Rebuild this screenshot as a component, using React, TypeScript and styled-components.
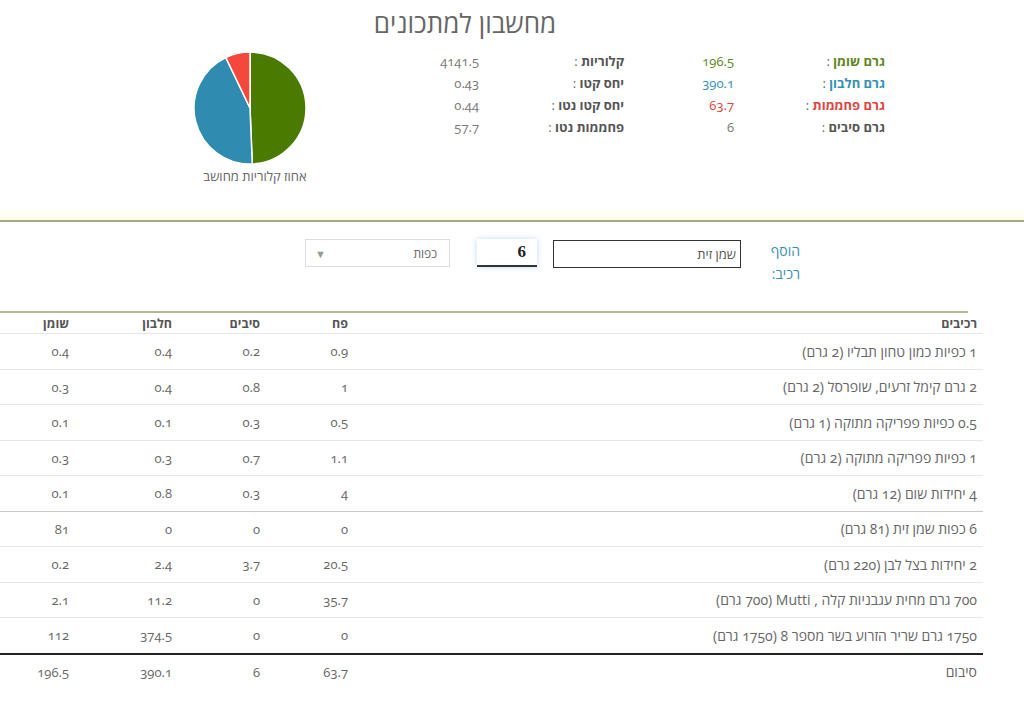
import React from "react";
import styled, { createGlobalStyle } from "styled-components";

const GlobalStyle = createGlobalStyle`
    body {
        margin: 0;
        background: #fff;
        font-family: "Open Sans", "Liberation Sans", "DejaVu Sans", sans-serif;
        font-variant-numeric: oldstyle-nums;
        color: #666;
    }
`;

const COLORS = {
    fat: "#4b7a00",
    protein: "#2f8cb0",
    carbs: "#f4483c",
};

type Stat = { label: string; value: string; color?: string };

const rightStats: Stat[] = [
    { label: "גרם שומן", value: "196.5", color: "#5f8520" },
    { label: "גרם חלבון", value: "390.1", color: "#3590b5" },
    { label: "גרם פחממות", value: "63.7", color: "#e0443f" },
    { label: "גרם סיבים", value: "6" },
];

const leftStats: Stat[] = [
    { label: "קלוריות", value: "4141.5" },
    { label: "יחס קטו", value: "0.43" },
    { label: "יחס קטו נטו", value: "0.44" },
    { label: "פחממות נטו", value: "57.7" },
];

type Ingredient = { name: string; carbs: string; fiber: string; protein: string; fat: string; strong?: boolean };

const ingredients: Ingredient[] = [
    { name: "1 כפיות כמון טחון תבליו (2 גרם)", carbs: "0.9", fiber: "0.2", protein: "0.4", fat: "0.4" },
    { name: "2 גרם קימל זרעים, שופרסל (2 גרם)", carbs: "1", fiber: "0.8", protein: "0.4", fat: "0.3" },
    { name: "0.5 כפיות פפריקה מתוקה (1 גרם)", carbs: "0.5", fiber: "0.3", protein: "0.1", fat: "0.1" },
    { name: "1 כפיות פפריקה מתוקה (2 גרם)", carbs: "1.1", fiber: "0.7", protein: "0.3", fat: "0.3" },
    { name: "4 יחידות שום (12 גרם)", carbs: "4", fiber: "0.3", protein: "0.8", fat: "0.1", strong: true },
    { name: "6 כפות שמן זית (81 גרם)", carbs: "0", fiber: "0", protein: "0", fat: "81" },
    { name: "2 יחידות בצל לבן (220 גרם)", carbs: "20.5", fiber: "3.7", protein: "2.4", fat: "0.2" },
    { name: "700 גרם מחית עגבניות קלה , Mutti (700 גרם)", carbs: "35.7", fiber: "0", protein: "11.2", fat: "2.1" },
    { name: "1750 גרם שריר הזרוע בשר מספר 8 (1750 גרם)", carbs: "0", fiber: "0", protein: "374.5", fat: "112" },
];

// pie slices by calories: fat x9, protein x4, carbs x4
function slicePath(cx: number, cy: number, r: number, from: number, to: number) {
    const a0 = ((from - 90) * Math.PI) / 180;
    const a1 = ((to - 90) * Math.PI) / 180;
    const x0 = cx + r * Math.cos(a0);
    const y0 = cy + r * Math.sin(a0);
    const x1 = cx + r * Math.cos(a1);
    const y1 = cy + r * Math.sin(a1);
    const large = to - from > 180 ? 1 : 0;
    return `M${cx},${cy} L${x0},${y0} A${r},${r} 0 ${large} 1 ${x1},${y1} Z`;
}

function Pie() {
    const parts = [
        { v: 196.5 * 9, c: COLORS.fat },
        { v: 390.1 * 4, c: COLORS.protein },
        { v: 63.7 * 4, c: COLORS.carbs },
    ];
    const total = parts.reduce((s, p) => s + p.v, 0);
    let start = 0;
    return (
        <svg width="116" height="116" viewBox="0 0 116 116">
            {parts.map((p, i) => {
                const end = start + (p.v / total) * 360;
                const d = slicePath(58, 58, 56, start, end);
                start = end;
                return <path key={i} d={d} fill={p.c} stroke="#fff" strokeWidth="1.5" />;
            })}
        </svg>
    );
}

export default function App() {
    return (
        <Page>
            <GlobalStyle />
            <Top>
                <Title>מחשבון למתכונים</Title>
                <Summary>
                    <StatsGrid>
                        {rightStats.map((r, i) => (
                            <React.Fragment key={r.label}>
                                <StatLabel $color={r.color}>
                                    {r.label} <Colon>:</Colon>
                                </StatLabel>
                                <StatValue $color={r.color}>{r.value}</StatValue>
                                <StatLabel>
                                    {leftStats[i].label} <Colon>:</Colon>
                                </StatLabel>
                                <StatValue>{leftStats[i].value}</StatValue>
                            </React.Fragment>
                        ))}
                    </StatsGrid>
                    <PieBox>
                        <Pie />
                        <PieCaption>אחוז קלוריות מחושב</PieCaption>
                    </PieBox>
                </Summary>
            </Top>

            <AddRow>
                <AddLabel>הוסף רכיב:</AddLabel>
                <NameInput defaultValue="שמן זית" />
                <AmountInput defaultValue="6" />
                <UnitSelect>
                    <span>כפות</span>
                    <Arrow>▼</Arrow>
                </UnitSelect>
            </AddRow>

            <Divider />

            <Table>
                <HeadRow>
                    <HeadCell $name>רכיבים</HeadCell>
                    <HeadCell>פח</HeadCell>
                    <HeadCell>סיבים</HeadCell>
                    <HeadCell>חלבון</HeadCell>
                    <HeadCell>שומן</HeadCell>
                </HeadRow>
                {ingredients.map((ing) => (
                    <Row key={ing.name} $strong={ing.strong}>
                        <Cell $name>{ing.name}</Cell>
                        <Cell>{ing.carbs}</Cell>
                        <Cell>{ing.fiber}</Cell>
                        <Cell>{ing.protein}</Cell>
                        <Cell>{ing.fat}</Cell>
                    </Row>
                ))}
                <TotalRow>
                    <Cell $name>סיבום</Cell>
                    <Cell>63.7</Cell>
                    <Cell>6</Cell>
                    <Cell>390.1</Cell>
                    <Cell>196.5</Cell>
                </TotalRow>
            </Table>
        </Page>
    );
}

const Page = styled.div`
    direction: rtl;
    width: 1024px;
    min-height: 709px;
    overflow: hidden;
`;

const Top = styled.div`
    height: 222px;
    box-sizing: border-box;
    padding-top: 8px;
    border-bottom: 2px solid #a3aa84;
    box-shadow: inset 0 -10px 10px -6px #fffbe4;
`;

const Title = styled.h1`
    width: 930px;
    margin: 0 94px 0 0;
    text-align: center;
    font-size: 26px;
    line-height: 30px;
    font-weight: 400;
    color: #666;
`;

const Summary = styled.div`
    display: flex;
    align-items: flex-start;
    padding-right: 139px;
    margin-top: 12px;
    gap: 49px;
`;

const StatsGrid = styled.div`
    display: grid;
    grid-template-columns: 151px 110px 145px 110px;
    grid-auto-rows: 22px;
    align-items: center;
    font-size: 13px;
`;

const StatLabel = styled.div<{ $color?: string }>`
    font-weight: 700;
    color: ${(p) => p.$color || "#555"};
`;

const Colon = styled.span`
    color: #666;
    font-weight: 400;
`;

const StatValue = styled.div<{ $color?: string }>`
    color: ${(p) => p.$color || "#777"};
`;

const PieBox = styled.div`
    width: 130px;
    display: flex;
    flex-direction: column;
    align-items: center;
    svg {
        margin-right: 10px;
    }
`;

const PieCaption = styled.div`
    font-size: 13px;
    color: #666;
    margin-top: 1px;
`;

const AddRow = styled.div`
    display: flex;
    align-items: flex-start;
    padding: 17px 224px 0 0;
    height: 89px;
    box-sizing: border-box;
`;

const AddLabel = styled.div`
    width: 34px;
    font-size: 14px;
    line-height: 23px;
    color: #3a8fb7;
    margin-top: 0;
    margin-left: 25px;
`;

const NameInput = styled.input`
    width: 188px;
    height: 28px;
    box-sizing: border-box;
    border: 1px solid #333;
    direction: rtl;
    padding: 0 4px;
    font-family: inherit;
    font-size: 13px;
    color: #555;
    margin: 1px 0 0 16px;
    outline: none;
`;

const AmountInput = styled.input`
    width: 60px;
    height: 28px;
    box-sizing: border-box;
    border: none;
    border-bottom: 2px solid #333;
    box-shadow: 0 0 6px rgba(120, 170, 230, 0.45);
    direction: ltr;
    text-align: right;
    padding: 0 11px;
    font-family: "Liberation Serif", serif;
    font-weight: 700;
    font-size: 17px;
    color: #222;
    margin-left: 27px;
    outline: none;
`;

const UnitSelect = styled.div`
    width: 145px;
    height: 28px;
    box-sizing: border-box;
    border: 1px solid #ddd;
    display: flex;
    align-items: center;
    justify-content: space-between;
    padding: 0 12px 0 9px;
    font-size: 12px;
    color: #666;
`;

const Arrow = styled.span`
    font-size: 11px;
    color: #999;
`;

const Divider = styled.div`
    width: 968px;
    height: 2px;
    background: #b4b893;
    margin-right: 56px;
`;

const Table = styled.div`
    width: 983px;
    margin-right: 41px;
    font-size: 13px;
`;

const gridCols = `
    display: grid;
    grid-template-columns: 1fr 88px 88px 103px 69px;
    align-items: center;
`;

const HeadRow = styled.div`
    ${gridCols}
    height: 20px;
    border-bottom: 1px solid #e6e6e6;
`;

const HeadCell = styled.div<{ $name?: boolean }>`
    font-weight: 700;
    color: #555;
    font-size: 12.5px;
    padding-right: ${(p) => (p.$name ? "6px" : "0")};
`;

const Row = styled.div<{ $strong?: boolean }>`
    ${gridCols}
    height: 35.5px;
    box-sizing: border-box;
    border-bottom: 1px solid ${(p) => (p.$strong ? "#c8c8c8" : "#e6e6e6")};
`;

const TotalRow = styled.div`
    ${gridCols}
    height: 34px;
    border-top: 2px solid #222;
    margin-top: -1px;
`;

const Cell = styled.div<{ $name?: boolean }>`
    color: #666;
    font-size: ${(p) => (p.$name ? "14px" : "13px")};
    padding-right: ${(p) => (p.$name ? "6px" : "0")};
    white-space: nowrap;
`;
